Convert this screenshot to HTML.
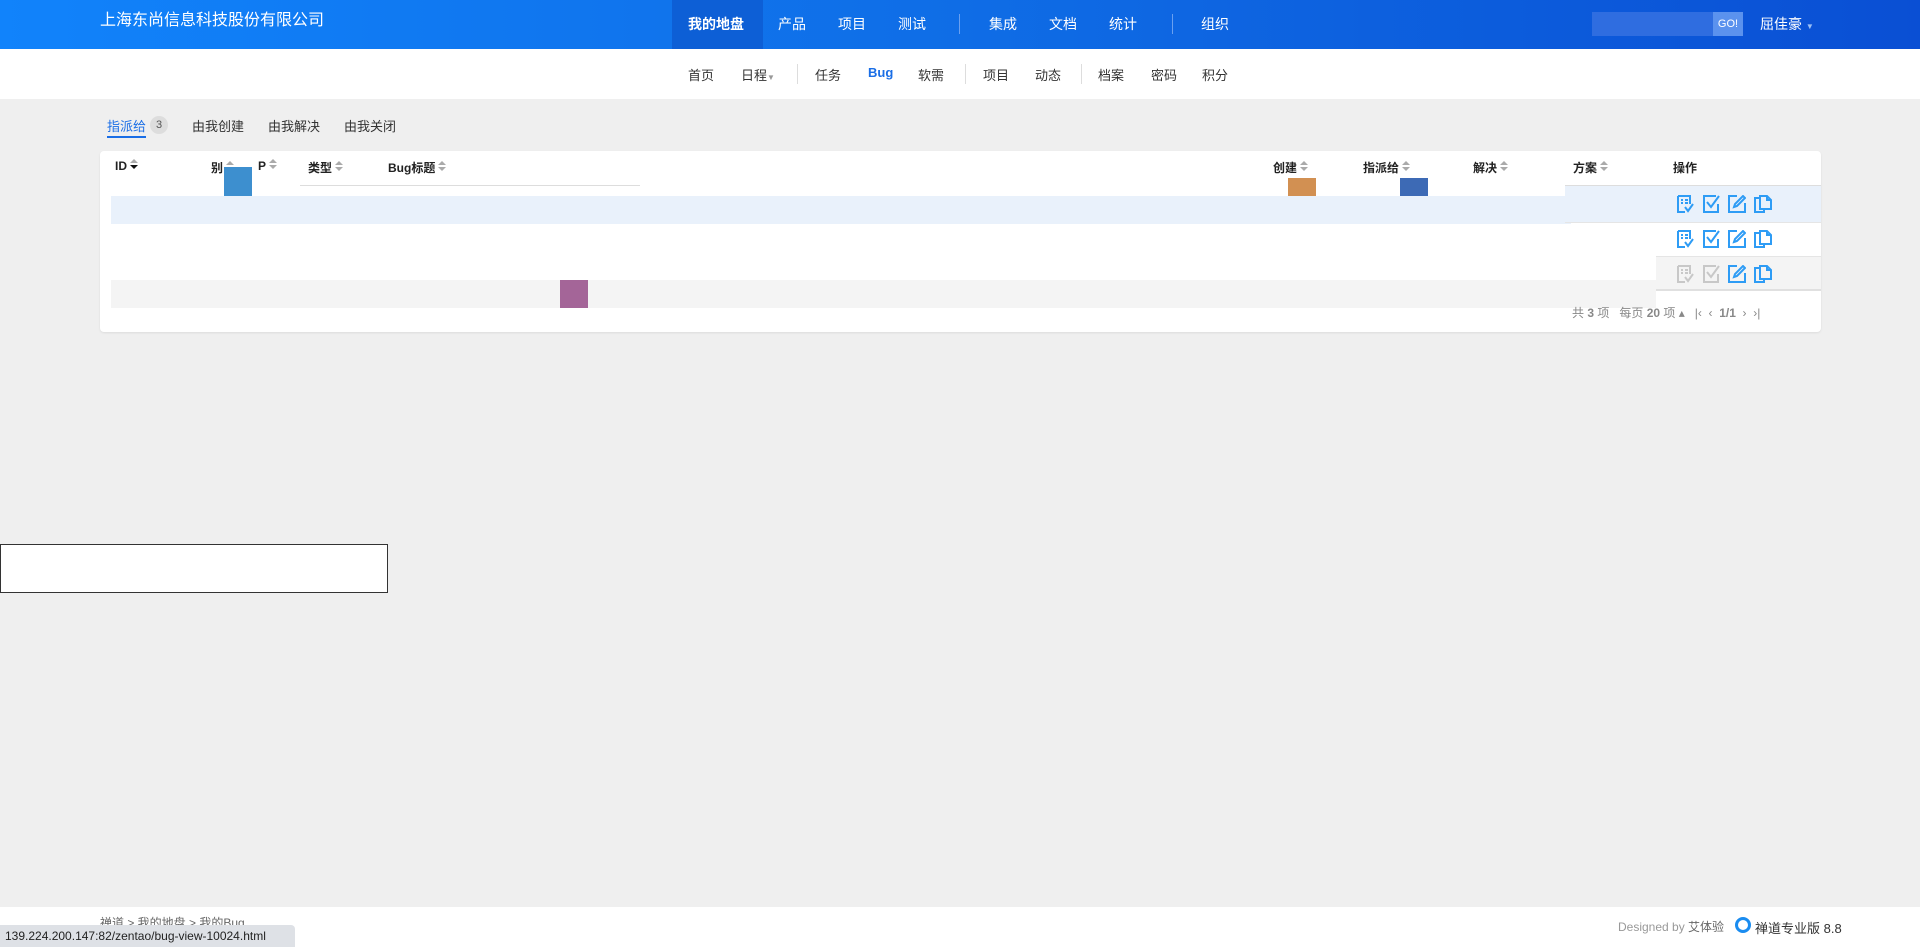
<!DOCTYPE html>
<html><head><meta charset="utf-8"><style>
*{margin:0;padding:0;box-sizing:border-box}
body{width:1920px;height:947px;background:#efefef;font-family:"Liberation Sans","Noto Sans CJK SC",sans-serif;position:relative;overflow:hidden;color:#333}
.a{position:absolute;white-space:nowrap}
#hd{left:0;top:0;width:1920px;height:49px;background:linear-gradient(90deg,#1183fb,#0f6de6 50%,#0a4fd4)}
.nv{color:#fff;font-size:14px;top:14px}
.sn{font-size:13px;top:65px;color:#333}
.dv{width:1px;background:#ddd}
.th{font-size:12px;font-weight:bold;top:159px;color:#222}
.th i{display:inline-block;width:0;height:0;border-left:4px solid transparent;border-right:4px solid transparent;border-bottom:4px solid #aaa;position:relative;top:-7px;margin-left:3px}
.th i:after{content:"";position:absolute;left:-4px;top:6px;border-left:4px solid transparent;border-right:4px solid transparent;border-top:4px solid #aaa}
.th i.d{border-bottom-color:#aaa}
.th i.d:after{border-top-color:#111}
svg.i{position:absolute;width:18px;height:18px;fill:none;stroke:#2e9cf5;stroke-width:2}
svg.g{stroke:#c8c8c8}
</style></head><body>
<svg width="0" height="0" style="position:absolute"><defs>
<symbol id="s1" viewBox="0 0 18 18"><path d="M2 1h12v8M2 1v16h7M5 5h2M9 5h3M5 8h2M9 8h3M9 12l3 4 5-7"/></symbol>
<symbol id="s2" viewBox="0 0 18 18"><path d="M15 9v8H1V1h12M4 7l4 5 8-11"/></symbol>
<symbol id="s3" viewBox="0 0 18 18"><path d="M9 1H1v16h16V8M6 12l1-3 8-8 2 2-8 8z"/></symbol>
<symbol id="s4" viewBox="0 0 18 18"><path d="M6 3H1v14h9v-3M6 1h7l4 4v9H6zM13 1v4h4"/></symbol>
</defs></svg>
<div class="a" id="hd"></div>
<div class="a" style="left:100px;top:6px;color:#fff;font-size:16px">上海东尚信息科技股份有限公司</div>
<div class="a" style="left:672px;top:0;width:91px;height:49px;background:#0d5fd6"></div>
<div class="a nv" style="left:688px;font-weight:bold">我的地盘</div>
<div class="a nv" style="left:778px">产品</div>
<div class="a nv" style="left:838px">项目</div>
<div class="a nv" style="left:898px">测试</div>
<div class="a" style="left:959px;top:14px;width:1px;height:20px;background:#6aa0f0"></div>
<div class="a nv" style="left:989px">集成</div>
<div class="a nv" style="left:1049px">文档</div>
<div class="a nv" style="left:1109px">统计</div>
<div class="a" style="left:1172px;top:14px;width:1px;height:20px;background:#6aa0f0"></div>
<div class="a nv" style="left:1201px">组织</div>
<div class="a" style="left:1592px;top:12px;width:121px;height:24px;background:#2f6de0"></div>
<div class="a" style="left:1713px;top:12px;width:30px;height:24px;background:#5b92ee;color:#fff;font-size:11px;line-height:24px;text-align:center">GO!</div>
<div class="a nv" style="left:1760px">屈佳豪 <span style="font-size:8px;color:#9cc0f5">▼</span></div>
<div class="a" style="left:0;top:49px;width:1920px;height:50px;background:#fff"></div>
<div class="a sn" style="left:688px">首页</div>
<div class="a sn" style="left:741px">日程<span style="font-size:8px;color:#999">▼</span></div>
<div class="a dv" style="left:797px;top:64px;height:20px"></div>
<div class="a sn" style="left:815px">任务</div>
<div class="a sn" style="left:868px;color:#1a6ee6;font-weight:bold">Bug</div>
<div class="a sn" style="left:918px">软需</div>
<div class="a dv" style="left:965px;top:64px;height:20px"></div>
<div class="a sn" style="left:983px">项目</div>
<div class="a sn" style="left:1035px">动态</div>
<div class="a dv" style="left:1081px;top:64px;height:20px"></div>
<div class="a sn" style="left:1098px">档案</div>
<div class="a sn" style="left:1151px">密码</div>
<div class="a sn" style="left:1202px">积分</div>
<div class="a" style="left:107px;top:116px;font-size:13px;color:#1a6ee6">指派给</div>
<div class="a" style="left:107px;top:136px;width:39px;height:2px;background:#1a6ee6"></div>
<div class="a" style="left:150px;top:116px;width:18px;height:18px;border-radius:9px;background:#ddd;font-size:11px;text-align:center;line-height:18px;color:#555">3</div>
<div class="a" style="left:192px;top:116px;font-size:13px">由我创建</div>
<div class="a" style="left:268px;top:116px;font-size:13px">由我解决</div>
<div class="a" style="left:344px;top:116px;font-size:13px">由我关闭</div>
<div class="a" style="left:100px;top:151px;width:1721px;height:181px;background:#fff;border-radius:4px;box-shadow:0 1px 2px rgba(0,0,0,.08)"></div>
<div class="a th" style="left:115px">ID<i class="d"></i></div>
<div class="a th" style="left:211px">别<i></i></div>
<div class="a th" style="left:258px">P<i></i></div>
<div class="a th" style="left:308px">类型<i></i></div>
<div class="a th" style="left:388px">Bug标题<i></i></div>
<div class="a th" style="left:1273px">创建<i></i></div>
<div class="a th" style="left:1363px">指派给<i></i></div>
<div class="a th" style="left:1473px">解决<i></i></div>
<div class="a th" style="left:1573px">方案<i></i></div>
<div class="a th" style="left:1673px">操作</div>
<div class="a" style="left:1565px;top:185px;width:256px;height:1px;background:#ddd"></div>
<div class="a" style="left:300px;top:185px;width:340px;height:1px;background:#ddd"></div>
<div class="a" style="left:111px;top:196px;width:1460px;height:28px;background:#e9f1fb"></div>
<div class="a" style="left:1565px;top:186px;width:256px;height:36px;background:#e9f1fb"></div>
<div class="a" style="left:1565px;top:222px;width:256px;height:1px;background:#e5e5e5"></div>
<div class="a" style="left:1656px;top:256px;width:165px;height:35px;background:#f4f4f4;border-top:1px solid #e5e5e5;border-bottom:2px solid #e0e0e0"></div>
<div class="a" style="left:111px;top:280px;width:1545px;height:28px;background:#f4f4f4"></div>
<div class="a" style="left:224px;top:167px;width:28px;height:29px;background:#3d8fcf"></div>
<div class="a" style="left:1288px;top:178px;width:28px;height:18px;background:#d29052"></div>
<div class="a" style="left:1400px;top:178px;width:28px;height:18px;background:#3d6ab5"></div>
<div class="a" style="left:560px;top:280px;width:28px;height:28px;background:#a46598"></div>
<svg class="i" style="left:1676px;top:195px"><use href="#s1"/></svg><svg class="i" style="left:1703px;top:195px"><use href="#s2"/></svg><svg class="i" style="left:1728px;top:195px"><use href="#s3"/></svg><svg class="i" style="left:1754px;top:195px"><use href="#s4"/></svg>
<svg class="i" style="left:1676px;top:230px"><use href="#s1"/></svg><svg class="i" style="left:1703px;top:230px"><use href="#s2"/></svg><svg class="i" style="left:1728px;top:230px"><use href="#s3"/></svg><svg class="i" style="left:1754px;top:230px"><use href="#s4"/></svg>
<svg class="i g" style="left:1676px;top:265px"><use href="#s1"/></svg><svg class="i g" style="left:1703px;top:265px"><use href="#s2"/></svg><svg class="i" style="left:1728px;top:265px"><use href="#s3"/></svg><svg class="i" style="left:1754px;top:265px"><use href="#s4"/></svg>
<div class="a" style="left:1572px;top:304px;font-size:12px;color:#888">共 <b>3</b> 项 &nbsp; 每页 <b>20</b> 项 ▴ &nbsp; |‹ &nbsp;‹ &nbsp;<b>1/1</b> &nbsp;› &nbsp;›|</div>
<div class="a" style="left:0;top:544px;width:388px;height:49px;background:#fff;border:1px solid #333"></div>
<div class="a" style="left:0;top:907px;width:1920px;height:40px;background:#fff"></div>
<div class="a" style="left:100px;top:914px;font-size:12px;color:#666">禅道 &gt; 我的地盘 &gt; 我的Bug</div>
<div class="a" style="left:0;top:925px;width:295px;height:22px;background:#dee1e6;border-radius:0 4px 0 0;font-size:12px;line-height:22px;padding-left:5px;color:#222">139.224.200.147:82/zentao/bug-view-10024.html</div>
<div class="a" style="left:1618px;top:918px;font-size:12px;color:#999">Designed by <span style="color:#666">艾体验</span></div>
<div class="a" style="left:1735px;top:917px;width:16px;height:16px;border-radius:8px;border:3px solid #1a8cf0"></div>
<div class="a" style="left:1755px;top:918px;font-size:13px;color:#333">禅道专业版 8.8</div>
</body></html>
